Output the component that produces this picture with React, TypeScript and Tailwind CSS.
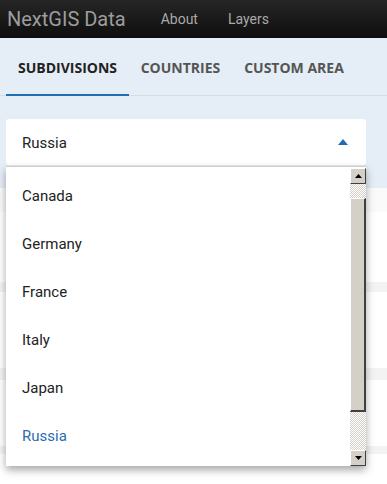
import React from "react";

const options = ["Canada", "Germany", "France", "Italy", "Japan", "Russia"];

export default function App() {
  return (
    <div className="relative w-[387px] h-[484px] overflow-hidden bg-white font-['Roboto',sans-serif]">
      {/* Header */}
      <div className="h-[38px] bg-gradient-to-b from-[#262626] to-[#0e0e0e] flex items-center">
        <span className="ml-[7px] text-[20px] text-[#9d9d9d] leading-none">NextGIS Data</span>
        <span className="ml-[35px] text-[14px] text-[#a9a9a9] leading-none">About</span>
        <span className="ml-[30px] text-[14px] text-[#a9a9a9] leading-none">Layers</span>
      </div>
      {/* Tabs + select area */}
      <div className="bg-[#e5edf6] h-[150px]">
        <div className="h-[58px] flex border-b border-[#d5dde6] font-['Open_Sans',sans-serif] font-bold text-[14px]">
          <div className="relative w-[123px] ml-[6px] pt-[2px] flex items-center justify-center text-[#222]">
            SUBDIVISIONS
            <div className="absolute left-0 right-0 bottom-[-1px] h-[2px] bg-[#1f6db3]" />
          </div>
          <div className="w-[103px] pt-[2px] flex items-center justify-center text-[#555]">COUNTRIES</div>
          <div className="w-[124px] pt-[2px] flex items-center justify-center text-[#555]">CUSTOM AREA</div>
        </div>
        <div className="mt-[23px] ml-[6px] w-[360px] h-[46px] bg-white rounded-[3px] flex items-center justify-between pl-[16px] pr-[16px] pt-[3px]">
          <span className="text-[15px] text-[#222]">Russia</span>
          <svg width="10" height="6" viewBox="0 0 10 6" className="mr-[2px] mb-[3px]">
            <path d="M0 6 L5 0 L10 6 Z" fill="#1f6db3" />
          </svg>
        </div>
      </div>
      {/* Background content below */}
      <div className="flex flex-col">
        <div className="h-[24px] bg-[#fafafa]" />
        <div className="h-[70px] bg-white" />
        <div className="h-[10px] bg-[#f3f3f3]" />
        <div className="h-[76px] bg-white" />
        <div className="h-[12px] bg-[#f3f3f3]" />
        <div className="h-[66px] bg-white" />
        <div className="h-[8px] bg-[#f3f3f3]" />
      </div>

      {/* Dropdown list */}
      <div className="absolute left-[6px] top-[166px] w-[360px] h-[300px] bg-white border-t border-[#ccc] shadow-[0_4px_8px_rgba(0,0,0,0.35)] flex">
        <div className="flex-1 flex flex-col pt-[5px]">
          {options.map((o) => (
            <div
              key={o}
              className={`h-[48px] flex items-center pl-[16px] text-[15px] ${o === "Russia" ? "text-[#2a6db1]" : "text-[#222]"}`}
            >
              {o}
            </div>
          ))}
        </div>
        {/* Scrollbar */}
        <div className="w-[16px] mt-[1px] flex flex-col bg-[repeating-conic-gradient(#d4d0c8_0_25%,#ffffff_0_50%)] bg-[length:2px_2px]">
          <div className="h-[16px] bg-[#d4d0c8] border-t border-l border-white border-r border-b border-r-[#404040] border-b-[#404040] flex items-center justify-center">
            <svg width="7" height="4" viewBox="0 0 7 4"><path d="M0 4 L3.5 0 L7 4 Z" fill="#000" /></svg>
          </div>
          <div className="h-[14px]" />
          <div className="h-[214px] bg-[#d4d0c8] border-t border-l border-white border-r-2 border-b-2 border-r-[#404040] border-b-[#404040]" />
          <div className="flex-1" />
          <div className="h-[16px] bg-[#d4d0c8] border-t border-l border-white border-r border-b border-r-[#404040] border-b-[#404040] flex items-center justify-center">
            <svg width="7" height="4" viewBox="0 0 7 4"><path d="M0 0 L3.5 4 L7 0 Z" fill="#000" /></svg>
          </div>
        </div>
      </div>
    </div>
  );
}
